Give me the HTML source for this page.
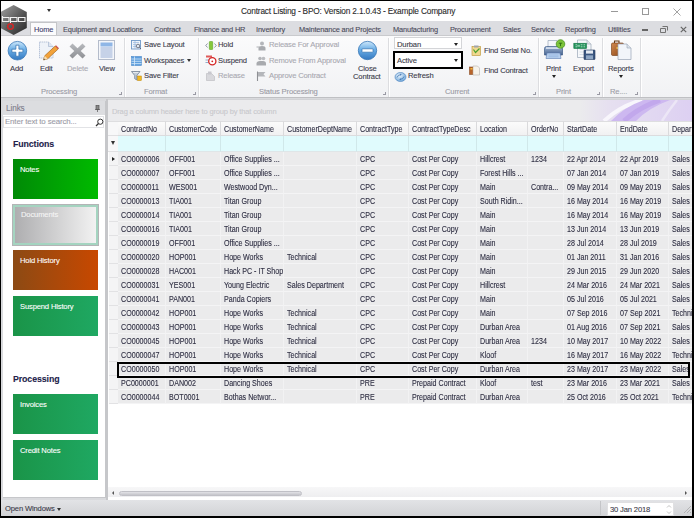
<!DOCTYPE html>
<html><head><meta charset="utf-8">
<style>
*{margin:0;padding:0;box-sizing:border-box}
html,body{width:694px;height:518px;overflow:hidden;background:#000}
body{position:relative;font-family:"Liberation Sans",sans-serif;font-size:7.5px;color:#3c3c48;letter-spacing:-0.15px;-webkit-text-stroke:0.1px currentColor}
.a{position:absolute;white-space:nowrap}
#app{position:absolute;left:1px;top:1px;width:691px;height:515px;background:#d9dadd;overflow:hidden}
#title{position:absolute;left:0;top:0;width:691px;height:20px;background:#fff}
#tabs{position:absolute;left:0;top:20px;width:691px;height:15px;background:#dcdde1}
#ribbon{position:absolute;left:0;top:34px;width:691px;height:62.5px;background:linear-gradient(#fbfbfc,#f1f2f4);border-top:1px solid #c9cacd;border-bottom:1px solid #bfc0c3}
.tab{position:absolute;top:3.5px;color:#4a4a5a;font-size:7.4px}
.sep{position:absolute;top:2px;width:1px;height:59px;background:#dcdde0;box-shadow:1px 0 0 #fff}
.glab{position:absolute;top:50.5px;color:#9a9aa4;font-size:7.6px}
.btn{position:absolute;color:#3a3a48;font-size:7.6px}
.dis{color:#a8a8b0}
#left{position:absolute;left:2px;top:100px;width:103px;height:397px;background:#fff;border-right:1px solid #c6c7ca;border-bottom:1px solid #c6c7ca}
#grid{position:absolute;left:105px;top:98px;width:586px;height:402px;background:#fff;border-left:2px solid #c6c7ca;border-bottom:1px solid #c8c9cc}
.hc{position:absolute;top:22px;height:15px;border-bottom:1px solid #dcdcde;border-top:1px solid #dedee0;background:linear-gradient(#fbfbfb,#f1f1f2);border-right:1px solid #dadadc;padding:2.5px 0 0 3px;color:#2c2c40;font-size:7.7px;letter-spacing:-0.3px}
.fc{position:absolute;top:37px;height:16px;border-bottom:1px solid #dfe6e8;background:#e0fbfd;border-right:1px solid #d0e8ea}
.ind{position:absolute;left:1px;width:11px;height:14px;background:#f4f4f5;border-bottom:1px solid #e2e2e4;border-right:1px solid #d8d8da}
.c{position:absolute;white-space:nowrap;height:14px;background:#ebebec;border-right:1px solid #f2f2f3;border-bottom:1px solid #f4f4f5;padding:3px 0 0 3px;overflow:hidden;color:#2c2c40;font-size:7.7px;letter-spacing:-0.3px}
.tile{position:absolute;left:11px;width:85px;height:40px;color:#fff;font-size:7.6px;padding:5.5px 0 0 7px}
#status{position:absolute;left:0;top:499px;width:691px;height:16px;background:linear-gradient(#e2e3e6,#d2d3d6)}
.hc i,.c i{font-style:normal;display:inline-block;font-size:8.2px;letter-spacing:0;transform:scaleX(0.87);transform-origin:0 0}
</style></head><body>
<div id="app">
 <div id="title">

  <div class="a" style="left:46px;top:7.5px;width:0;height:0;border-left:2.5px solid transparent;border-right:2.5px solid transparent;border-top:3.5px solid #333"></div>
  <div class="a" style="left:240px;top:5px;font-size:8.3px;color:#2a2a2a;letter-spacing:-0.18px">Contract Listing - BPO: Version 2.1.0.43 - Example Company</div>
  <div class="a" style="left:610px;top:10px;width:7px;height:1px;background:#999"></div>
  <div class="a" style="left:641px;top:7px;width:7px;height:7px;border:1px solid #999"></div>
  <svg class="a" style="left:672px;top:7px" width="8" height="8"><path d="M0.5 0.5L7.5 7.5M7.5 0.5L0.5 7.5" stroke="#999" stroke-width="0.9"/></svg>
 </div>
 <div id="tabs">
  <div class="a" style="left:29px;top:1px;width:27px;height:15px;background:#fbfbfc;border:1px solid #c4c5c8;border-bottom:none"></div>
  <div class="tab" style="left:33px;color:#3b3b6b">Home</div>
  <div class="tab" style="left:62px">Equipment and Locations</div>
  <div class="tab" style="left:153px">Contract</div>
  <div class="tab" style="left:193px">Finance and HR</div>
  <div class="tab" style="left:255px">Inventory</div>
  <div class="tab" style="left:298px">Maintenance and Projects</div>
  <div class="tab" style="left:392px">Manufacturing</div>
  <div class="tab" style="left:449px">Procurement</div>
  <div class="tab" style="left:502px">Sales</div>
  <div class="tab" style="left:530px">Service</div>
  <div class="tab" style="left:564px">Reporting</div>
  <div class="tab" style="left:607px">Utilities</div>
  <div class="a" style="left:641px;top:8px;width:6px;height:1.5px;background:#666"></div>
  <svg class="a" style="left:659px;top:5px" width="8" height="7"><path d="M2.5 0.5h5v4M0.5 2.5h5v4h-5z" fill="none" stroke="#666" stroke-width="0.9"/></svg>
  <svg class="a" style="left:679px;top:5px" width="7" height="7"><path d="M0.8 0.8L6.2 6.2M6.2 0.8L0.8 6.2" stroke="#666" stroke-width="1.2"/></svg>
 </div>

 <svg class="a" style="left:-1px;top:3px;z-index:5" width="28" height="33" viewBox="0 0 28 33">
   <defs><linearGradient id="lg" x1="0" y1="0" x2="1" y2="1"><stop offset="0" stop-color="#a4a4a4"/><stop offset="0.5" stop-color="#5e5e5e"/><stop offset="1" stop-color="#262626"/></linearGradient></defs>
   <polygon points="13.6,1 26.8,8 26.8,24 13.6,31 0.5,24 0.5,8" fill="url(#lg)"/>
   <path d="M2.5 12v5.5h6.5v-4h-6.5M10.5 19.5v-6h6.5v4h-6.5M18.5 13.5h6.5v4h-6.5z" fill="none" stroke="#f2f2f2" stroke-width="1.1"/>
   <circle cx="10.5" cy="22.5" r="2.8" fill="none" stroke="#d02828" stroke-width="1.6"/>
   <circle cx="10.5" cy="22.5" r="4.2" fill="none" stroke="#2a6a5a" stroke-width="0.6" stroke-dasharray="1 1.2"/>
 </svg>
 <div id="ribbon">
  <!-- Processing group -->
 <svg class="a" style="left:6px;top:4px" width="21" height="21" viewBox="0 0 21 21">
  <defs><linearGradient id="gAdd" x1="0" y1="0" x2="0" y2="1"><stop offset="0" stop-color="#cfe8fa"/><stop offset="0.45" stop-color="#6aaee6"/><stop offset="1" stop-color="#3478c0"/></linearGradient></defs>
  <circle cx="10.4" cy="10.7" r="9.3" fill="url(#gAdd)" stroke="#3a78b8" stroke-width="0.8"/>
  <path d="M8.9 5.2h3v4h4v3h-4v4h-3v-4h-4v-3h4z" fill="#fff" stroke="#2f6eae" stroke-width="0.7"/>
 </svg>
 <div class="btn" style="left:9px;top:28px">Add</div>
 <svg class="a" style="left:36px;top:4px" width="22" height="21" viewBox="0 0 22 21">
  <path d="M2.5 2h9l4.5 4.5v11.5h-13.5z" fill="#eef2f8" stroke="#a8b8d0" stroke-width="0.8" stroke-dasharray="1.5 0.6"/>
  <path d="M11.5 2v4.5h4.5" fill="#dfe6f0" stroke="#a8b8d0" stroke-width="0.7"/>
  <path d="M6.5 20l1.2-4.2 10.5-9.8 3 3-10.5 9.8z" fill="#f2a23a" stroke="#9a5a10" stroke-width="0.6"/>
  <path d="M18.2 6l3 3 0.8-0.8-3-3z" fill="#d04a4a"/>
  <path d="M6.5 20l1.2-4.2 3 3z" fill="#f6dcae"/>
  <path d="M6.5 20l0.5-1.6 1.1 1.1z" fill="#333"/>
 </svg>
 <div class="btn" style="left:39px;top:28px">Edit</div>
 <svg class="a" style="left:68px;top:7px" width="17" height="16" viewBox="0 0 17 16">
  <defs><linearGradient id="gX" x1="0" y1="0" x2="0" y2="1"><stop offset="0" stop-color="#b8babe"/><stop offset="1" stop-color="#8e9094"/></linearGradient></defs>
  <path d="M0.5 3.5L3.5 0.5L8.5 5.2L13.5 0.5L16.5 3.5L11.7 8L16.5 12.5L13.5 15.5L8.5 10.8L3.5 15.5L0.5 12.5L5.3 8z" fill="url(#gX)"/>
 </svg>
 <div class="btn dis" style="left:66px;top:28px">Delete</div>
 <svg class="a" style="left:97px;top:4px" width="18" height="21" viewBox="0 0 18 21">
  <rect x="0.5" y="0.5" width="16" height="19" fill="#f4f6fa" stroke="#b4bccb" stroke-width="1"/>
  <rect x="2.5" y="2.5" width="12" height="4" fill="#8fb6e6"/>
  <rect x="2.5" y="7" width="12" height="11" fill="#c6d2e8"/>
 </svg>
 <div class="btn" style="left:98px;top:28px">View</div>
 <div class="glab" style="left:40px">Processing</div>
 <div class="a" style="left:118px;top:56px;width:3px;height:3px;border-right:1px solid #9a9aa4;border-bottom:1px solid #9a9aa4"></div>
 <div class="sep" style="left:123px"></div>
 <!-- Format group -->
 <svg class="a" style="left:130px;top:4px" width="11" height="10" viewBox="0 0 11 10">
  <rect x="0.5" y="0.5" width="9" height="8.5" fill="#eef3fa" stroke="#6f98c8" stroke-width="0.9"/>
  <path d="M2 2.5h6M2 4.5h3M2 6.5h3M4 1v7.5" stroke="#9ab8dc" stroke-width="0.7"/>
  <circle cx="7" cy="6" r="1.8" fill="#dfe8f2" stroke="#5a6070" stroke-width="0.8"/>
  <path d="M8.3 7.3L10 9" stroke="#5a6070" stroke-width="0.9"/>
 </svg>
 <div class="btn" style="left:143px;top:4px">Save Layout</div>
 <svg class="a" style="left:130px;top:19.5px" width="11" height="10" viewBox="0 0 11 10">
  <rect x="0.5" y="0.5" width="10" height="9" fill="#5d9ede" stroke="#4a88c8" stroke-width="0.6"/>
  <path d="M0.5 3h10M0.5 5.3h10M0.5 7.6h10M3.5 0.5v9" stroke="#d6e8f8" stroke-width="0.8"/>
 </svg>
 <div class="btn" style="left:143px;top:19.5px">Workspaces</div>
 <div class="a" style="left:186px;top:23px;width:0;height:0;border-left:2.5px solid transparent;border-right:2.5px solid transparent;border-top:3px solid #333"></div>
 <svg class="a" style="left:130px;top:34.5px" width="11" height="10" viewBox="0 0 11 10">
  <path d="M0.5 0.5h8.5l-3.2 4v4.5l-2.1-1.3v-3.2z" fill="#c2ccd8" stroke="#66768a" stroke-width="0.7"/>
  <path d="M2 1.5h5.5" stroke="#fff" stroke-width="0.6"/>
  <rect x="6.5" y="5" width="3.8" height="4.5" fill="#f2b820" stroke="#b88000" stroke-width="0.5"/>
 </svg>
 <div class="btn" style="left:143px;top:35px">Save Filter</div>
 <div class="glab" style="left:143px">Format</div>
 <div class="a" style="left:192px;top:56px;width:3px;height:3px;border-right:1px solid #9a9aa4;border-bottom:1px solid #9a9aa4"></div>
 <div class="sep" style="left:197px"></div>
 <!-- Status Processing -->
 <svg class="a" style="left:204px;top:4.5px" width="12" height="9" viewBox="0 0 12 9">
  <rect x="4.3" y="0.5" width="3.4" height="8" rx="0.6" fill="#86c83a" stroke="#4f9a1a" stroke-width="0.5"/>
  <path d="M2.5 2.5L0.8 4.5l1.7 2M9.5 2.5l1.7 2-1.7 2" fill="none" stroke="#707a86" stroke-width="0.8"/>
 </svg>
 <div class="btn" style="left:217px;top:4px">Hold</div>
 <svg class="a" style="left:204px;top:19px" width="12" height="11" viewBox="0 0 12 11">
  <rect x="1" y="0.5" width="6" height="2" fill="#e05a5a"/>
  <path d="M0.5 5h3M0.5 7.5h3" stroke="#7a9ac0" stroke-width="0.8"/>
  <circle cx="7.3" cy="6.3" r="3.6" fill="#fff" stroke="#d42424" stroke-width="1.3"/>
  <circle cx="7.3" cy="6.3" r="0.9" fill="#d42424"/>
 </svg>
 <div class="btn" style="left:217px;top:19.5px">Suspend</div>
 <svg class="a" style="left:204px;top:34.5px" width="11" height="10" viewBox="0 0 11 10">
  <path d="M1.5 2.5h5l3 3v4h-8z" fill="#d8d8dc" stroke="#b8b8be" stroke-width="0.6"/>
  <path d="M3 0.5h3.5v3H3z" fill="#c8c8ce"/>
 </svg>
 <div class="btn dis" style="left:217px;top:35px">Release</div>
 <svg class="a" style="left:255px;top:4.5px" width="11" height="10" viewBox="0 0 11 10">
  <circle cx="6" cy="2.5" r="2" fill="#b4b6ba"/><path d="M2.5 9.5v-2.5q0-2 3.5-2t3.5 2v2.5z" fill="#a8aaae"/><path d="M0.5 6h3" stroke="#b0b2b6" stroke-width="1"/>
 </svg>
 <div class="btn dis" style="left:268px;top:4px">Release For Approval</div>
 <svg class="a" style="left:255px;top:19.5px" width="11" height="10" viewBox="0 0 11 10">
  <circle cx="4" cy="2.5" r="1.8" fill="#b4b6ba"/><circle cx="7.5" cy="2.5" r="1.8" fill="#babcc0"/><path d="M0.5 9.5v-2q0-2.5 3.5-2.5h3q3 0 3 2.5v2z" fill="#a8aaae"/>
 </svg>
 <div class="btn dis" style="left:268px;top:19.5px">Remove From Approval</div>
 <svg class="a" style="left:255px;top:34.5px" width="11" height="10" viewBox="0 0 11 10">
  <path d="M1.5 0.5v9.5" stroke="#8e9094" stroke-width="1.1"/><path d="M2 1h7.5l-2 2.2 2 2.2H2z" fill="#b4b6ba"/>
 </svg>
 <div class="btn dis" style="left:268px;top:35px">Approve Contract</div>
 <svg class="a" style="left:356px;top:4px" width="21" height="21" viewBox="0 0 21 21">
  <defs><linearGradient id="gCl" x1="0" y1="0" x2="0" y2="1"><stop offset="0" stop-color="#cfe8fa"/><stop offset="0.45" stop-color="#6aaee6"/><stop offset="1" stop-color="#3478c0"/></linearGradient></defs>
  <circle cx="10.5" cy="10.5" r="9.2" fill="url(#gCl)" stroke="#3a78b8" stroke-width="0.8"/>
  <rect x="5" y="8.8" width="11" height="3.4" rx="0.5" fill="#fff" stroke="#2f6eae" stroke-width="0.7"/>
 </svg>
 <div class="btn" style="left:357px;top:28px">Close</div>
 <div class="btn" style="left:352px;top:36px">Contract</div>
 <div class="glab" style="left:258px">Status Processing</div>
 <div class="a" style="left:382px;top:56px;width:3px;height:3px;border-right:1px solid #9a9aa4;border-bottom:1px solid #9a9aa4"></div>
 <div class="sep" style="left:387px"></div>
 <!-- Current -->
 <div class="a" style="left:393px;top:1px;width:68px;height:12px;background:#fff;border:1px solid #d4d5d8"></div>
 <div class="btn" style="left:396px;top:3.5px">Durban</div>
 <div class="a" style="left:453px;top:7px;width:0;height:0;border-left:2.5px solid transparent;border-right:2.5px solid transparent;border-top:3px solid #222"></div>
 <div class="a" style="left:392px;top:15px;width:70px;height:18px;background:#fff;border:2px solid #000"></div>
 <div class="btn" style="left:396px;top:20px">Active</div>
 <div class="a" style="left:453px;top:23px;width:0;height:0;border-left:2.5px solid transparent;border-right:2.5px solid transparent;border-top:3px solid #222"></div>
 <svg class="a" style="left:393px;top:34.5px" width="13" height="11" viewBox="0 0 13 11">
  <defs><radialGradient id="gRf" cx="0.4" cy="0.35" r="0.7"><stop offset="0" stop-color="#eaf4fc"/><stop offset="1" stop-color="#6aa4d8"/></radialGradient></defs>
  <ellipse cx="6.5" cy="6" rx="5.5" ry="4.5" fill="url(#gRf)" stroke="#5a8cc4" stroke-width="0.7"/>
  <path d="M3 6.5q1-3 4-2.8M10 5.5q-1 3-4 2.8" fill="none" stroke="#3a70b0" stroke-width="0.8"/>
  <path d="M6.5 2.5l1.2 1.2-1.5 0.8M6.5 9.5l-1.2-1.2 1.5-0.8" fill="#3a70b0"/>
 </svg>
 <div class="btn" style="left:407px;top:35px">Refresh</div>
 <svg class="a" style="left:470px;top:9px" width="11" height="11" viewBox="0 0 11 11">
  <rect x="1" y="1.5" width="8.5" height="9" fill="#f0d890" stroke="#b89030" stroke-width="0.6"/>
  <rect x="3" y="0.5" width="4.5" height="2" fill="#a0a4aa"/>
  <path d="M2.5 4.5l2 3 4-4" fill="none" stroke="#4aa030" stroke-width="1.2"/>
 </svg>
 <div class="btn" style="left:483px;top:10px">Find Serial No.</div>
 <svg class="a" style="left:468px;top:29px" width="11" height="11" viewBox="0 0 11 11">
  <rect x="0.5" y="2" width="6" height="7.5" fill="#b8642a" stroke="#7a3a10" stroke-width="0.5"/>
  <path d="M4 1h4.5l2 2v7h-6.5z" fill="#f6f2ea" stroke="#a8a09a" stroke-width="0.5"/>
  <rect x="1.5" y="3" width="2" height="1.5" fill="#f0c040"/>
 </svg>
 <div class="btn" style="left:483px;top:30px">Find Contract</div>
 <div class="glab" style="left:444px">Current</div>
 <div class="a" style="left:532px;top:56px;width:3px;height:3px;border-right:1px solid #9a9aa4;border-bottom:1px solid #9a9aa4"></div>
 <div class="sep" style="left:537px"></div>
 <!-- Print -->
 <svg class="a" style="left:542px;top:3px" width="24" height="22" viewBox="0 0 24 22">
  <defs><linearGradient id="gPr" x1="0" y1="0" x2="0" y2="1"><stop offset="0" stop-color="#9fb6d6"/><stop offset="1" stop-color="#46628e"/></linearGradient></defs>
  <path d="M5 1.5h9l2 2v6h-11z" fill="#f4f6fa" stroke="#8a9ab0" stroke-width="0.6"/>
  <path d="M1.5 9.5q0-2 2-2h14q2 0 2 2v6.5h-18z" fill="url(#gPr)" stroke="#3e5a86" stroke-width="0.7"/>
  <rect x="3" y="8.3" width="15" height="1.6" fill="#d8e2f0"/>
  <path d="M4 14h13l1 5.5h-15z" fill="#b8d0ee" stroke="#5a7ab0" stroke-width="0.6"/>
  <path d="M5.5 16h10M5.5 17.8h10" stroke="#7aa0d4" stroke-width="0.5"/>
  <circle cx="17.5" cy="5" r="4.3" fill="#7cc43a" stroke="#3f8a18" stroke-width="0.7"/>
  <path d="M15.8 4.2h3.4M17.5 4.2v3" stroke="#2a6a10" stroke-width="0.9"/>
 </svg>
 <div class="btn" style="left:545px;top:28px">Print</div>
 <div class="a" style="left:551px;top:39px;width:0;height:0;border-left:2.5px solid transparent;border-right:2.5px solid transparent;border-top:3px solid #222"></div>
 <svg class="a" style="left:572px;top:3px" width="24" height="22" viewBox="0 0 24 22">
  <path d="M4.5 1h9.5l4 4v13.5h-13.5z" fill="#f6f8fb" stroke="#9aa6b6" stroke-width="0.7"/>
  <path d="M14 1v4h4" fill="#e4e8ee" stroke="#9aa6b6" stroke-width="0.6"/>
  <path d="M6.5 8h9M6.5 10.5h5M6.5 13h5M6.5 15.5h5" stroke="#c8d0da" stroke-width="0.6"/>
  <rect x="0.8" y="4.2" width="12.8" height="5.4" fill="#21925a" stroke="#127040" stroke-width="0.5"/>
  <path d="M2.5 5.8h1.6M2.5 7.8h1.6M5 5.8v2M6.2 5.8v2M7.7 5.8h1.8M7.7 7.8h1.8M10.5 5.8h1.6M10.5 7.8h1.6" stroke="#e6f6ec" stroke-width="0.7"/>
  <rect x="11" y="11" width="11" height="9.5" rx="0.6" fill="#3a5680" stroke="#22385a" stroke-width="0.6"/>
  <rect x="13" y="11.4" width="7" height="3.2" fill="#e4eaf2"/>
  <rect x="13" y="16.3" width="7" height="4" fill="#8ea6c4"/>
 </svg>
 <div class="btn" style="left:572px;top:28px">Export</div>
 <div class="glab" style="left:555px">Print</div>
 <div class="a" style="left:596px;top:56px;width:3px;height:3px;border-right:1px solid #9a9aa4;border-bottom:1px solid #9a9aa4"></div>
 <div class="sep" style="left:601px"></div>
 <!-- Reports -->
 <svg class="a" style="left:609px;top:3px" width="24" height="22" viewBox="0 0 24 22">
  <defs><linearGradient id="gBr" x1="0" y1="0" x2="1" y2="1"><stop offset="0" stop-color="#d28a50"/><stop offset="1" stop-color="#8a4414"/></linearGradient></defs>
  <path d="M4.5 4.5v-2.5h4.5v2.5" fill="none" stroke="#6a3a14" stroke-width="1.1"/>
  <rect x="1.5" y="4" width="12" height="12.5" rx="1.2" fill="url(#gBr)" stroke="#6e3810" stroke-width="0.6"/>
  <rect x="6.5" y="8" width="2" height="2" fill="#f2c040"/>
  <path d="M8 5h9l4 4v11.5h-13z" fill="#f2f5fa" stroke="#98a4b6" stroke-width="0.7"/>
  <path d="M17 5v4h4" fill="#dde3ec" stroke="#98a4b6" stroke-width="0.6"/>
 </svg>
 <div class="btn" style="left:607px;top:28px">Reports</div>
 <div class="a" style="left:618px;top:39px;width:0;height:0;border-left:2.5px solid transparent;border-right:2.5px solid transparent;border-top:3px solid #222"></div>
 <div class="glab" style="left:609px">Re....</div>
 <div class="a" style="left:634px;top:56px;width:3px;height:3px;border-right:1px solid #9a9aa4;border-bottom:1px solid #9a9aa4"></div>
 <div class="sep" style="left:639px"></div>

 </div>
 <div id="left">
  <div class="a" style="left:0;top:0;width:102px;height:14px;background:#dcdde0"></div>
 <div class="a" style="left:3px;top:2.5px;color:#7c7c8a;font-size:8.2px;letter-spacing:-0.1px">Links</div>
 <svg class="a" style="left:92px;top:4px" width="5" height="7" viewBox="0 0 5 7"><rect x="1" y="0.5" width="3" height="4" fill="#888" stroke="#555" stroke-width="0.7"/><path d="M0 4.5h5M2.5 4.5v2.5" stroke="#555" stroke-width="0.7"/></svg>
 <div class="a" style="left:0;top:15px;width:101px;height:12px;background:#fff;border:1px solid #e2e3e6"></div>
 <div class="a" style="left:2px;top:16px;color:#9a9aa6;font-size:7.9px">Enter text to search...</div>
 <svg class="a" style="left:92px;top:17px" width="9" height="9" viewBox="0 0 9 9"><circle cx="5.3" cy="3.7" r="2.6" fill="none" stroke="#333" stroke-width="1"/><path d="M3.5 5.5L1 8" stroke="#333" stroke-width="1.3"/></svg>
 <div class="a" style="left:10px;top:37.5px;font-weight:bold;font-size:8.8px;color:#22224a;letter-spacing:-0.1px">Functions</div>
 <div class="tile" style="left:10px;top:58px;background:linear-gradient(90deg,#008a06,#00ba00)">Notes</div>
 <div class="tile" style="left:10px;top:104px;width:85px;height:40px;background:linear-gradient(90deg,#aeaeb0,#f2f2f2);border:2px solid #a4d4c0;outline:1px solid #b4b4b6;padding:3px 0 0 6px;color:#f6f6f6">Documents</div>
 <div class="tile" style="left:10px;top:149px;background:linear-gradient(90deg,#8c4a14,#c84800)">Hold History</div>
 <div class="tile" style="left:10px;top:195px;background:linear-gradient(90deg,#1a9448,#1fa862)">Suspend History</div>
 <div class="a" style="left:10px;top:272.5px;font-weight:bold;font-size:8.8px;color:#22224a;letter-spacing:-0.1px">Processing</div>
 <div class="tile" style="left:10px;top:293px;background:linear-gradient(90deg,#1a9448,#1fa862)">Invoices</div>
 <div class="tile" style="left:10px;top:339px;background:linear-gradient(90deg,#1a9448,#1fa862)">Credit Notes</div>

 </div>
 <div id="grid">
  <div class="a" style="left:0;top:0;width:584px;height:22px;background:#ebebed;border-top:1px solid #d2d3d6"></div>
  <svg class="a" style="left:472px;top:1px;filter:blur(0.7px)" width="112" height="21" viewBox="0 0 112 21">
   <defs><linearGradient id="pw" x1="0" y1="0" x2="1" y2="0"><stop offset="0" stop-color="#ebebed"/><stop offset="0.25" stop-color="#e6e0f0"/><stop offset="1" stop-color="#ddd0f2"/></linearGradient></defs>
   <rect width="112" height="21" fill="url(#pw)"/>
   <path d="M24 21Q40 6 62 0" fill="none" stroke="#f8f6fc" stroke-width="4"/>
   <path d="M31 21L56 21Q68 8 90 0L64 0Q44 7 31 21z" fill="#cdb8f0"/>
   <path d="M44 21Q58 8 80 0" fill="none" stroke="#c2a8ec" stroke-width="5"/>
   <path d="M82 21Q89 10 97 0" fill="none" stroke="#ece6f6" stroke-width="2.5"/>
  </svg>
  <div class="a" style="left:4px;top:8px;color:#c8c8cc">Drag a column header here to group by that column</div>
  <div class="a" style="left:0;top:22px;width:11px;height:15px;background:#f8f8f9;border-right:1px solid #dadadc;border-bottom:1px solid #e0e0e2;border-top:1px solid #dedee0"></div>
  <div class="a" style="left:0;top:37px;width:11px;height:16px;background:#f8f8f9;border-right:1px solid #dadadc;border-bottom:1px solid #e0e0e2"></div>
  <div class="a" style="z-index:2;left:3px;top:42px;width:0;height:0;border-left:2.5px solid transparent;border-right:2.5px solid transparent;border-top:4px solid #333"></div>
  <div class="a" style="z-index:2;left:4px;top:58px;width:0;height:0;border-top:2.5px solid transparent;border-bottom:2.5px solid transparent;border-left:3px solid #222"></div>
  <div class="hc" style="left:10px;width:48px"><i>ContractNo</i></div>
<div class="hc" style="left:58px;width:55px"><i>CustomerCode</i></div>
<div class="hc" style="left:113px;width:63px"><i>CustomerName</i></div>
<div class="hc" style="left:176px;width:73px"><i>CustomerDeptName</i></div>
<div class="hc" style="left:249px;width:52px"><i>ContractType</i></div>
<div class="hc" style="left:301px;width:68px"><i>ContractTypeDesc</i></div>
<div class="hc" style="left:369px;width:51px"><i>Location</i></div>
<div class="hc" style="left:420px;width:36px"><i>OrderNo</i></div>
<div class="hc" style="left:456px;width:53px"><i>StartDate</i></div>
<div class="hc" style="left:509px;width:52px"><i>EndDate</i></div>
<div class="hc" style="left:561px;width:71px"><i>Department</i></div>
<div class="fc" style="left:10px;width:48px"></div>
<div class="fc" style="left:58px;width:55px"></div>
<div class="fc" style="left:113px;width:63px"></div>
<div class="fc" style="left:176px;width:73px"></div>
<div class="fc" style="left:249px;width:52px"></div>
<div class="fc" style="left:301px;width:68px"></div>
<div class="fc" style="left:369px;width:51px"></div>
<div class="fc" style="left:420px;width:36px"></div>
<div class="fc" style="left:456px;width:53px"></div>
<div class="fc" style="left:509px;width:52px"></div>
<div class="fc" style="left:561px;width:71px"></div>
<div class="ind" style="top:53px"></div>
<div class="c" style="left:10px;top:53px;width:48px"><i>CO0000006</i></div>
<div class="c" style="left:58px;top:53px;width:55px"><i>OFF001</i></div>
<div class="c" style="left:113px;top:53px;width:63px"><i>Office Supplies ...</i></div>
<div class="c" style="left:176px;top:53px;width:73px"><i></i></div>
<div class="c" style="left:249px;top:53px;width:52px"><i>CPC</i></div>
<div class="c" style="left:301px;top:53px;width:68px"><i>Cost Per Copy</i></div>
<div class="c" style="left:369px;top:53px;width:51px"><i>Hillcrest</i></div>
<div class="c" style="left:420px;top:53px;width:36px"><i>1234</i></div>
<div class="c" style="left:456px;top:53px;width:53px"><i>22 Apr 2014</i></div>
<div class="c" style="left:509px;top:53px;width:52px"><i>22 Apr 2019</i></div>
<div class="c" style="left:561px;top:53px;width:71px"><i>Sales Department</i></div>
<div class="ind" style="top:67px"></div>
<div class="c" style="left:10px;top:67px;width:48px"><i>CO0000007</i></div>
<div class="c" style="left:58px;top:67px;width:55px"><i>OFF001</i></div>
<div class="c" style="left:113px;top:67px;width:63px"><i>Office Supplies ...</i></div>
<div class="c" style="left:176px;top:67px;width:73px"><i></i></div>
<div class="c" style="left:249px;top:67px;width:52px"><i>CPC</i></div>
<div class="c" style="left:301px;top:67px;width:68px"><i>Cost Per Copy</i></div>
<div class="c" style="left:369px;top:67px;width:51px"><i>Forest Hills ...</i></div>
<div class="c" style="left:420px;top:67px;width:36px"><i></i></div>
<div class="c" style="left:456px;top:67px;width:53px"><i>07 Jan 2014</i></div>
<div class="c" style="left:509px;top:67px;width:52px"><i>07 Jan 2019</i></div>
<div class="c" style="left:561px;top:67px;width:71px"><i>Sales Department</i></div>
<div class="ind" style="top:81px"></div>
<div class="c" style="left:10px;top:81px;width:48px"><i>CO0000011</i></div>
<div class="c" style="left:58px;top:81px;width:55px"><i>WES001</i></div>
<div class="c" style="left:113px;top:81px;width:63px"><i>Westwood Dyn...</i></div>
<div class="c" style="left:176px;top:81px;width:73px"><i></i></div>
<div class="c" style="left:249px;top:81px;width:52px"><i>CPC</i></div>
<div class="c" style="left:301px;top:81px;width:68px"><i>Cost Per Copy</i></div>
<div class="c" style="left:369px;top:81px;width:51px"><i>Main</i></div>
<div class="c" style="left:420px;top:81px;width:36px"><i>Contra...</i></div>
<div class="c" style="left:456px;top:81px;width:53px"><i>09 May 2014</i></div>
<div class="c" style="left:509px;top:81px;width:52px"><i>09 May 2019</i></div>
<div class="c" style="left:561px;top:81px;width:71px"><i>Sales Department</i></div>
<div class="ind" style="top:95px"></div>
<div class="c" style="left:10px;top:95px;width:48px"><i>CO0000013</i></div>
<div class="c" style="left:58px;top:95px;width:55px"><i>TIA001</i></div>
<div class="c" style="left:113px;top:95px;width:63px"><i>Titan Group</i></div>
<div class="c" style="left:176px;top:95px;width:73px"><i></i></div>
<div class="c" style="left:249px;top:95px;width:52px"><i>CPC</i></div>
<div class="c" style="left:301px;top:95px;width:68px"><i>Cost Per Copy</i></div>
<div class="c" style="left:369px;top:95px;width:51px"><i>South Ridin...</i></div>
<div class="c" style="left:420px;top:95px;width:36px"><i></i></div>
<div class="c" style="left:456px;top:95px;width:53px"><i>16 May 2014</i></div>
<div class="c" style="left:509px;top:95px;width:52px"><i>16 May 2019</i></div>
<div class="c" style="left:561px;top:95px;width:71px"><i>Sales Department</i></div>
<div class="ind" style="top:109px"></div>
<div class="c" style="left:10px;top:109px;width:48px"><i>CO0000014</i></div>
<div class="c" style="left:58px;top:109px;width:55px"><i>TIA001</i></div>
<div class="c" style="left:113px;top:109px;width:63px"><i>Titan Group</i></div>
<div class="c" style="left:176px;top:109px;width:73px"><i></i></div>
<div class="c" style="left:249px;top:109px;width:52px"><i>CPC</i></div>
<div class="c" style="left:301px;top:109px;width:68px"><i>Cost Per Copy</i></div>
<div class="c" style="left:369px;top:109px;width:51px"><i>Main</i></div>
<div class="c" style="left:420px;top:109px;width:36px"><i></i></div>
<div class="c" style="left:456px;top:109px;width:53px"><i>16 May 2014</i></div>
<div class="c" style="left:509px;top:109px;width:52px"><i>16 May 2019</i></div>
<div class="c" style="left:561px;top:109px;width:71px"><i>Sales Department</i></div>
<div class="ind" style="top:123px"></div>
<div class="c" style="left:10px;top:123px;width:48px"><i>CO0000016</i></div>
<div class="c" style="left:58px;top:123px;width:55px"><i>TIA001</i></div>
<div class="c" style="left:113px;top:123px;width:63px"><i>Titan Group</i></div>
<div class="c" style="left:176px;top:123px;width:73px"><i></i></div>
<div class="c" style="left:249px;top:123px;width:52px"><i>CPC</i></div>
<div class="c" style="left:301px;top:123px;width:68px"><i>Cost Per Copy</i></div>
<div class="c" style="left:369px;top:123px;width:51px"><i>Main</i></div>
<div class="c" style="left:420px;top:123px;width:36px"><i></i></div>
<div class="c" style="left:456px;top:123px;width:53px"><i>13 Jun 2014</i></div>
<div class="c" style="left:509px;top:123px;width:52px"><i>13 Jun 2019</i></div>
<div class="c" style="left:561px;top:123px;width:71px"><i>Sales Department</i></div>
<div class="ind" style="top:137px"></div>
<div class="c" style="left:10px;top:137px;width:48px"><i>CO0000019</i></div>
<div class="c" style="left:58px;top:137px;width:55px"><i>OFF001</i></div>
<div class="c" style="left:113px;top:137px;width:63px"><i>Office Supplies ...</i></div>
<div class="c" style="left:176px;top:137px;width:73px"><i></i></div>
<div class="c" style="left:249px;top:137px;width:52px"><i>CPC</i></div>
<div class="c" style="left:301px;top:137px;width:68px"><i>Cost Per Copy</i></div>
<div class="c" style="left:369px;top:137px;width:51px"><i>Main</i></div>
<div class="c" style="left:420px;top:137px;width:36px"><i></i></div>
<div class="c" style="left:456px;top:137px;width:53px"><i>28 Jul 2014</i></div>
<div class="c" style="left:509px;top:137px;width:52px"><i>28 Jul 2019</i></div>
<div class="c" style="left:561px;top:137px;width:71px"><i>Sales Department</i></div>
<div class="ind" style="top:151px"></div>
<div class="c" style="left:10px;top:151px;width:48px"><i>CO0000020</i></div>
<div class="c" style="left:58px;top:151px;width:55px"><i>HOP001</i></div>
<div class="c" style="left:113px;top:151px;width:63px"><i>Hope Works</i></div>
<div class="c" style="left:176px;top:151px;width:73px"><i>Technical</i></div>
<div class="c" style="left:249px;top:151px;width:52px"><i>CPC</i></div>
<div class="c" style="left:301px;top:151px;width:68px"><i>Cost Per Copy</i></div>
<div class="c" style="left:369px;top:151px;width:51px"><i>Main</i></div>
<div class="c" style="left:420px;top:151px;width:36px"><i></i></div>
<div class="c" style="left:456px;top:151px;width:53px"><i>01 Jan 2011</i></div>
<div class="c" style="left:509px;top:151px;width:52px"><i>31 Jan 2016</i></div>
<div class="c" style="left:561px;top:151px;width:71px"><i>Sales Department</i></div>
<div class="ind" style="top:165px"></div>
<div class="c" style="left:10px;top:165px;width:48px"><i>CO0000028</i></div>
<div class="c" style="left:58px;top:165px;width:55px"><i>HAC001</i></div>
<div class="c" style="left:113px;top:165px;width:63px"><i>Hack PC - IT Shop</i></div>
<div class="c" style="left:176px;top:165px;width:73px"><i></i></div>
<div class="c" style="left:249px;top:165px;width:52px"><i>CPC</i></div>
<div class="c" style="left:301px;top:165px;width:68px"><i>Cost Per Copy</i></div>
<div class="c" style="left:369px;top:165px;width:51px"><i>Main</i></div>
<div class="c" style="left:420px;top:165px;width:36px"><i></i></div>
<div class="c" style="left:456px;top:165px;width:53px"><i>29 Jun 2015</i></div>
<div class="c" style="left:509px;top:165px;width:52px"><i>29 Jun 2020</i></div>
<div class="c" style="left:561px;top:165px;width:71px"><i>Sales Department</i></div>
<div class="ind" style="top:179px"></div>
<div class="c" style="left:10px;top:179px;width:48px"><i>CO0000031</i></div>
<div class="c" style="left:58px;top:179px;width:55px"><i>YES001</i></div>
<div class="c" style="left:113px;top:179px;width:63px"><i>Young Electric</i></div>
<div class="c" style="left:176px;top:179px;width:73px"><i>Sales Department</i></div>
<div class="c" style="left:249px;top:179px;width:52px"><i>CPC</i></div>
<div class="c" style="left:301px;top:179px;width:68px"><i>Cost Per Copy</i></div>
<div class="c" style="left:369px;top:179px;width:51px"><i>Hillcrest</i></div>
<div class="c" style="left:420px;top:179px;width:36px"><i></i></div>
<div class="c" style="left:456px;top:179px;width:53px"><i>24 Mar 2016</i></div>
<div class="c" style="left:509px;top:179px;width:52px"><i>24 Mar 2021</i></div>
<div class="c" style="left:561px;top:179px;width:71px"><i>Sales Department</i></div>
<div class="ind" style="top:193px"></div>
<div class="c" style="left:10px;top:193px;width:48px"><i>CO0000041</i></div>
<div class="c" style="left:58px;top:193px;width:55px"><i>PAN001</i></div>
<div class="c" style="left:113px;top:193px;width:63px"><i>Panda Copiers</i></div>
<div class="c" style="left:176px;top:193px;width:73px"><i></i></div>
<div class="c" style="left:249px;top:193px;width:52px"><i>CPC</i></div>
<div class="c" style="left:301px;top:193px;width:68px"><i>Cost Per Copy</i></div>
<div class="c" style="left:369px;top:193px;width:51px"><i>Main</i></div>
<div class="c" style="left:420px;top:193px;width:36px"><i></i></div>
<div class="c" style="left:456px;top:193px;width:53px"><i>05 Jul 2016</i></div>
<div class="c" style="left:509px;top:193px;width:52px"><i>05 Jul 2021</i></div>
<div class="c" style="left:561px;top:193px;width:71px"><i>Sales Department</i></div>
<div class="ind" style="top:207px"></div>
<div class="c" style="left:10px;top:207px;width:48px"><i>CO0000042</i></div>
<div class="c" style="left:58px;top:207px;width:55px"><i>HOP001</i></div>
<div class="c" style="left:113px;top:207px;width:63px"><i>Hope Works</i></div>
<div class="c" style="left:176px;top:207px;width:73px"><i>Technical</i></div>
<div class="c" style="left:249px;top:207px;width:52px"><i>CPC</i></div>
<div class="c" style="left:301px;top:207px;width:68px"><i>Cost Per Copy</i></div>
<div class="c" style="left:369px;top:207px;width:51px"><i>Main</i></div>
<div class="c" style="left:420px;top:207px;width:36px"><i></i></div>
<div class="c" style="left:456px;top:207px;width:53px"><i>07 Sep 2016</i></div>
<div class="c" style="left:509px;top:207px;width:52px"><i>07 Sep 2021</i></div>
<div class="c" style="left:561px;top:207px;width:71px"><i>Technical</i></div>
<div class="ind" style="top:221px"></div>
<div class="c" style="left:10px;top:221px;width:48px"><i>CO0000043</i></div>
<div class="c" style="left:58px;top:221px;width:55px"><i>HOP001</i></div>
<div class="c" style="left:113px;top:221px;width:63px"><i>Hope Works</i></div>
<div class="c" style="left:176px;top:221px;width:73px"><i>Technical</i></div>
<div class="c" style="left:249px;top:221px;width:52px"><i>CPC</i></div>
<div class="c" style="left:301px;top:221px;width:68px"><i>Cost Per Copy</i></div>
<div class="c" style="left:369px;top:221px;width:51px"><i>Durban Area</i></div>
<div class="c" style="left:420px;top:221px;width:36px"><i></i></div>
<div class="c" style="left:456px;top:221px;width:53px"><i>01 Aug 2016</i></div>
<div class="c" style="left:509px;top:221px;width:52px"><i>07 Sep 2021</i></div>
<div class="c" style="left:561px;top:221px;width:71px"><i>Sales Department</i></div>
<div class="ind" style="top:235px"></div>
<div class="c" style="left:10px;top:235px;width:48px"><i>CO0000045</i></div>
<div class="c" style="left:58px;top:235px;width:55px"><i>HOP001</i></div>
<div class="c" style="left:113px;top:235px;width:63px"><i>Hope Works</i></div>
<div class="c" style="left:176px;top:235px;width:73px"><i>Technical</i></div>
<div class="c" style="left:249px;top:235px;width:52px"><i>CPC</i></div>
<div class="c" style="left:301px;top:235px;width:68px"><i>Cost Per Copy</i></div>
<div class="c" style="left:369px;top:235px;width:51px"><i>Durban Area</i></div>
<div class="c" style="left:420px;top:235px;width:36px"><i>1234</i></div>
<div class="c" style="left:456px;top:235px;width:53px"><i>10 May 2017</i></div>
<div class="c" style="left:509px;top:235px;width:52px"><i>10 May 2022</i></div>
<div class="c" style="left:561px;top:235px;width:71px"><i>Sales Department</i></div>
<div class="ind" style="top:249px"></div>
<div class="c" style="left:10px;top:249px;width:48px"><i>CO0000047</i></div>
<div class="c" style="left:58px;top:249px;width:55px"><i>HOP001</i></div>
<div class="c" style="left:113px;top:249px;width:63px"><i>Hope Works</i></div>
<div class="c" style="left:176px;top:249px;width:73px"><i>Technical</i></div>
<div class="c" style="left:249px;top:249px;width:52px"><i>CPC</i></div>
<div class="c" style="left:301px;top:249px;width:68px"><i>Cost Per Copy</i></div>
<div class="c" style="left:369px;top:249px;width:51px"><i>Kloof</i></div>
<div class="c" style="left:420px;top:249px;width:36px"><i></i></div>
<div class="c" style="left:456px;top:249px;width:53px"><i>16 May 2017</i></div>
<div class="c" style="left:509px;top:249px;width:52px"><i>16 May 2022</i></div>
<div class="c" style="left:561px;top:249px;width:71px"><i>Technical</i></div>
<div class="ind" style="top:263px"></div>
<div class="c" style="left:10px;top:263px;width:48px"><i>CO0000050</i></div>
<div class="c" style="left:58px;top:263px;width:55px"><i>HOP001</i></div>
<div class="c" style="left:113px;top:263px;width:63px"><i>Hope Works</i></div>
<div class="c" style="left:176px;top:263px;width:73px"><i>Technical</i></div>
<div class="c" style="left:249px;top:263px;width:52px"><i>CPC</i></div>
<div class="c" style="left:301px;top:263px;width:68px"><i>Cost Per Copy</i></div>
<div class="c" style="left:369px;top:263px;width:51px"><i>Durban Area</i></div>
<div class="c" style="left:420px;top:263px;width:36px"><i></i></div>
<div class="c" style="left:456px;top:263px;width:53px"><i>23 May 2017</i></div>
<div class="c" style="left:509px;top:263px;width:52px"><i>23 May 2022</i></div>
<div class="c" style="left:561px;top:263px;width:71px"><i>Sales</i></div>
<div class="ind" style="top:277px"></div>
<div class="c" style="left:10px;top:277px;width:48px"><i>PC0000001</i></div>
<div class="c" style="left:58px;top:277px;width:55px"><i>DAN002</i></div>
<div class="c" style="left:113px;top:277px;width:63px"><i>Dancing Shoes</i></div>
<div class="c" style="left:176px;top:277px;width:73px"><i></i></div>
<div class="c" style="left:249px;top:277px;width:52px"><i>PRE</i></div>
<div class="c" style="left:301px;top:277px;width:68px"><i>Prepaid Contract</i></div>
<div class="c" style="left:369px;top:277px;width:51px"><i>Kloof</i></div>
<div class="c" style="left:420px;top:277px;width:36px"><i>test</i></div>
<div class="c" style="left:456px;top:277px;width:53px"><i>23 Mar 2016</i></div>
<div class="c" style="left:509px;top:277px;width:52px"><i>23 Mar 2021</i></div>
<div class="c" style="left:561px;top:277px;width:71px"><i>Sales Department</i></div>
<div class="ind" style="top:291px"></div>
<div class="c" style="left:10px;top:291px;width:48px"><i>CO0000044</i></div>
<div class="c" style="left:58px;top:291px;width:55px"><i>BOT0001</i></div>
<div class="c" style="left:113px;top:291px;width:63px"><i>Bothas Networ...</i></div>
<div class="c" style="left:176px;top:291px;width:73px"><i></i></div>
<div class="c" style="left:249px;top:291px;width:52px"><i>PRE</i></div>
<div class="c" style="left:301px;top:291px;width:68px"><i>Prepaid Contract</i></div>
<div class="c" style="left:369px;top:291px;width:51px"><i>Durban Area</i></div>
<div class="c" style="left:420px;top:291px;width:36px"><i></i></div>
<div class="c" style="left:456px;top:291px;width:53px"><i>25 Oct 2016</i></div>
<div class="c" style="left:509px;top:291px;width:52px"><i>25 Oct 2021</i></div>
<div class="c" style="left:561px;top:291px;width:71px"><i>Technical</i></div>
  <div class="a" style="left:9px;top:263px;width:573px;height:16px;border:2px solid #000;z-index:3"></div>
  <div class="a" style="left:0;top:388px;width:584px;height:10px;background:linear-gradient(#f7f7f8,#eeeef0)"></div>
  <div class="a" style="left:11px;top:392px;width:183px;height:5px;border-radius:2.5px;background:linear-gradient(#e2e2e6,#c4c4ca);border:1px solid #c0c0c6"></div>
  <div class="a" style="left:4px;top:392px;width:0;height:0;border-top:2px solid transparent;border-bottom:2px solid transparent;border-right:2.5px solid #555"></div>
  <div class="a" style="left:577px;top:392px;width:0;height:0;border-top:2px solid transparent;border-bottom:2px solid transparent;border-left:2.5px solid #555"></div>
 </div>
 <div id="status">
  <div class="a" style="left:4px;top:4px;font-size:7.6px;color:#3a3a48">Open Windows</div>
 <div class="a" style="left:56px;top:8px;width:0;height:0;border-left:2.5px solid transparent;border-right:2.5px solid transparent;border-top:3px solid #333"></div>
 <div class="a" style="left:599px;top:1px;width:1px;height:14px;background:#c4c5c8"></div>
 <div class="a" style="left:606px;top:2px;width:67px;height:14px;background:#fff;border:1px solid #e0e0e2"></div>
 <div class="a" style="left:609px;top:5px;font-size:7.6px;color:#3a3a48">30 Jan 2018</div>
 <svg class="a" style="left:665px;top:4px" width="6" height="11"><path d="M1 3.5L3 1.5L5 3.5M1 7.5L3 9.5L5 7.5" fill="none" stroke="#aaa" stroke-width="0.7"/></svg>
 <svg class="a" style="left:682px;top:5px" width="9" height="9"><path d="M8 1L1 8M8 4L4 8M8 7L7 8" stroke="#a8a8aa" stroke-width="0.8"/></svg>

 </div>
</div>
</body></html>
